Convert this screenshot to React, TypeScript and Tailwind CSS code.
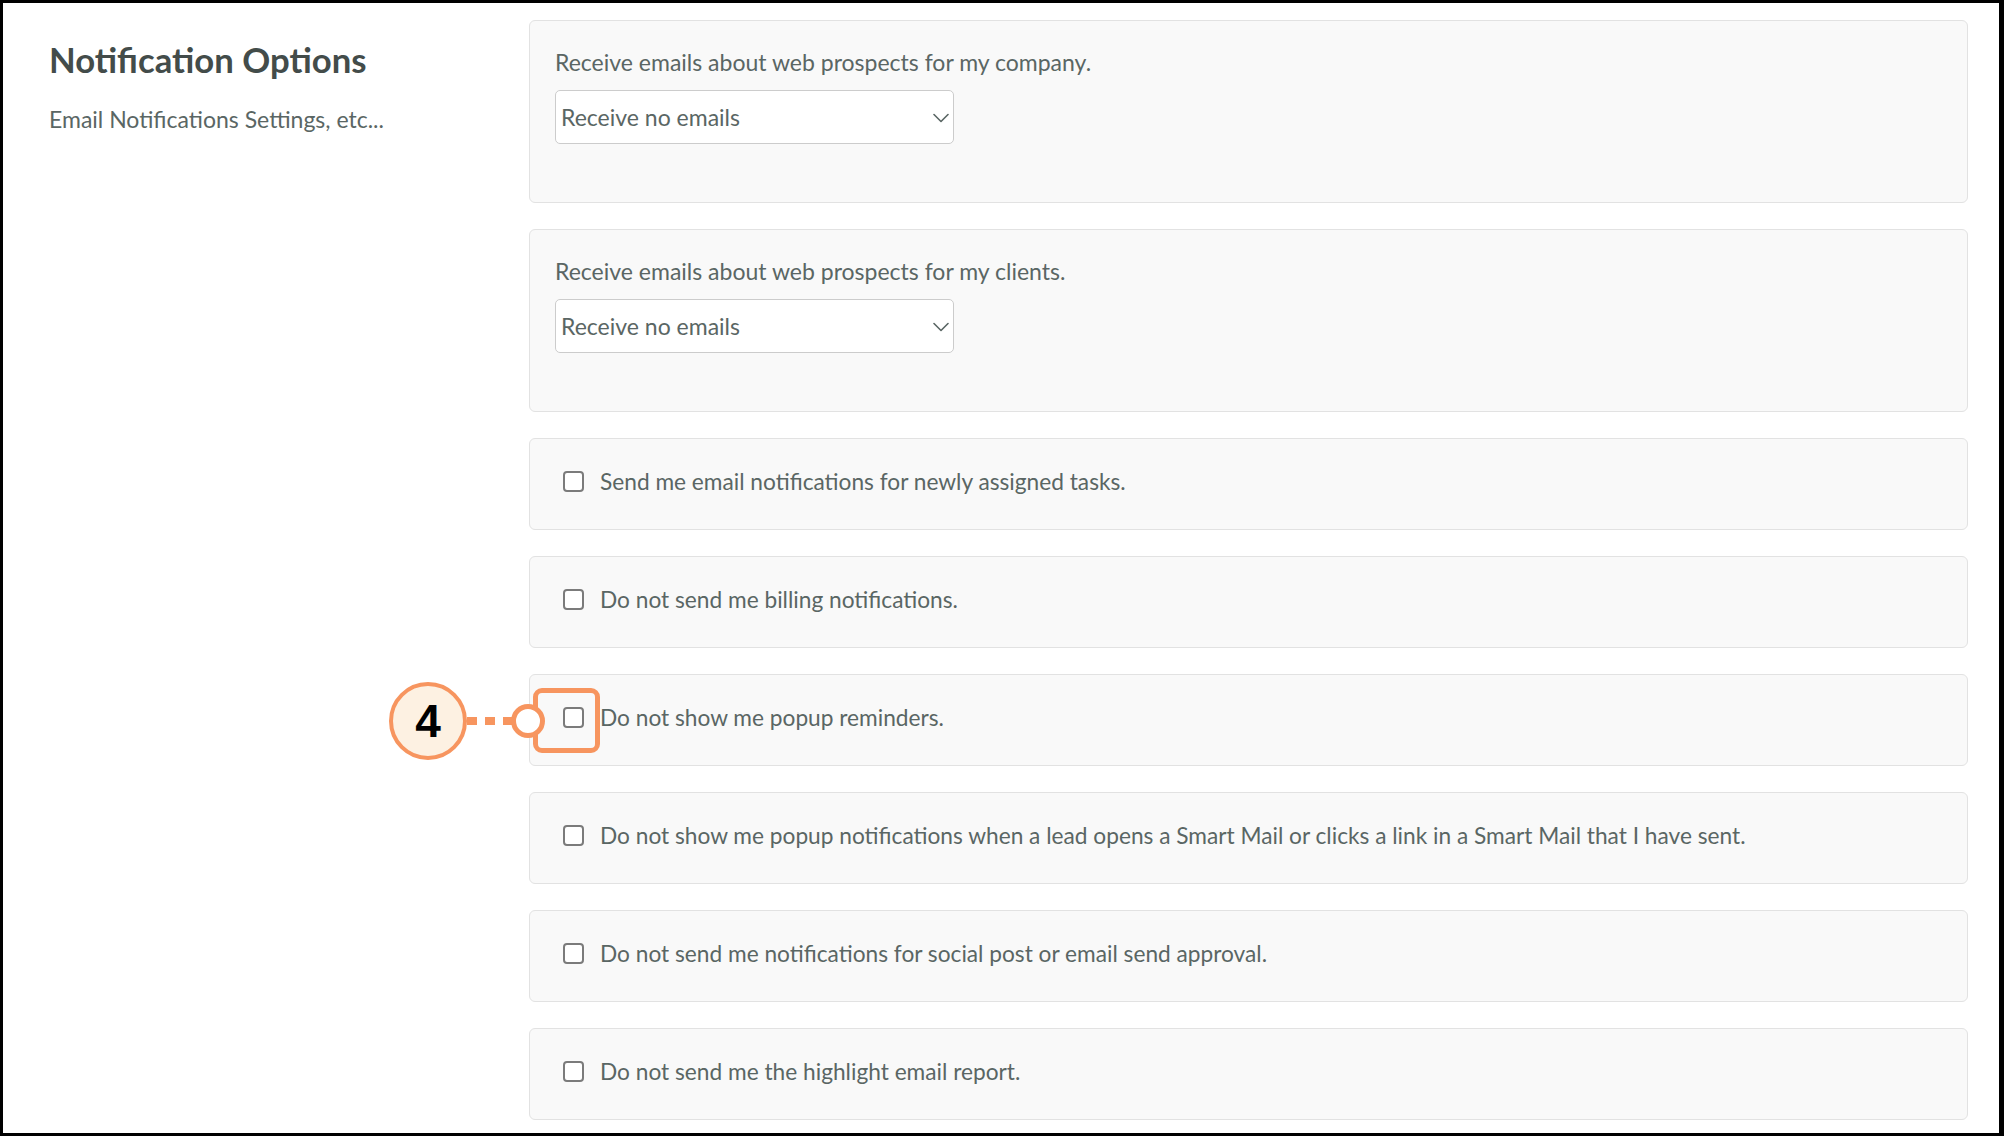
const selectGroups = [
  'Receive emails about web prospects for my company.',
  'Receive emails about web prospects for my clients.',
];

const checkOptions = [
  'Send me email notifications for newly assigned tasks.',
  'Do not send me billing notifications.',
  'Do not show me popup reminders.',
  'Do not show me popup notifications when a lead opens a Smart Mail or clicks a link in a Smart Mail that I have sent.',
  'Do not send me notifications for social post or email send approval.',
  'Do not send me the highlight email report.',
];

// the orange "4" callout pointing at the popup reminders checkbox
function Callout() {
  return (
    <>
      <div className="absolute left-[3px] top-[13px] w-[67px] h-[65px] rounded-[9px] border-[5px] border-[#f7955f]" />
      <div className="absolute left-[-63px] top-[42px] flex gap-[8px]">
        <div className="w-[10px] h-[8px] bg-[#f7955f]" />
        <div className="w-[10px] h-[8px] bg-[#f7955f]" />
        <div className="w-[10px] h-[8px] bg-[#f7955f]" />
      </div>
      <div className="absolute left-[-19px] top-[29px] w-[34px] h-[34px] rounded-full border-[5px] border-[#f7955f] bg-white" />
      <div className="absolute left-[-141px] top-[7px] w-[78px] h-[78px] rounded-full border-[4px] border-[#f7955f] bg-[#fdf1e2] flex items-center justify-center">
        <span className="font-['Liberation_Sans',Arial,sans-serif] font-bold text-[46px] leading-none text-black">4</span>
      </div>
    </>
  );
}

export default function App() {
  return (
    <div className="w-[2004px] h-[1136px] overflow-hidden bg-white border-black border-t-[3px] border-l-[3px] border-r-[5px] border-b-[3px] font-['Lato',sans-serif] text-[#5a6664]">
      <div className="flex">
        {/* left column */}
        <aside className="w-[526px] shrink-0 pl-[46px] pt-[37px]">
          <h1 className="text-[34.7px] leading-[40px] font-bold text-[#434c4a]">Notification Options</h1>
          <p className="mt-[24px] text-[23px] leading-[30px]">Email Notifications Settings, etc...</p>
        </aside>

        {/* settings cards */}
        <main className="flex-1 pt-[17px] pr-[31px] flex flex-col gap-[26px]">
          {selectGroups.map((label) => (
            <div key={label} className="h-[183px] rounded-[6px] border border-[#e2e2e2] bg-[#f9f9f9] px-[25px] pt-[26px]">
              <p className="text-[23px] leading-[30px]">{label}</p>
              <div className="relative mt-[13px] w-[399px] h-[54px]">
                <select className="appearance-none w-full h-full rounded-[5px] border border-[#cccccc] bg-white pl-[5px] text-[23px] text-[#5a6664] outline-none">
                  <option>Receive no emails</option>
                </select>
                <svg
                  className="absolute left-[378px] top-[23px] pointer-events-none"
                  width="16"
                  height="10"
                  viewBox="0 0 16 10"
                  fill="none"
                  stroke="#5a6664"
                  strokeWidth={1.6}
                  strokeLinecap="round"
                  strokeLinejoin="round"
                >
                  <path d="M1 1.5l7 7 7-7" />
                </svg>
              </div>
            </div>
          ))}

          {checkOptions.map((label, i) => (
            <div key={label} className="relative h-[92px] rounded-[6px] border border-[#e2e2e2] bg-[#f9f9f9] pl-[33px] pb-[5px] flex items-center gap-[16px]">
              <input
                type="checkbox"
                className="appearance-none w-[21px] h-[21px] rounded-[4px] border-2 border-[#7b7b7b] bg-white shrink-0"
              />
              <span className="text-[22.7px] leading-[30px]">{label}</span>
              {i === 2 && <Callout />}
            </div>
          ))}
        </main>
      </div>
    </div>
  );
}
